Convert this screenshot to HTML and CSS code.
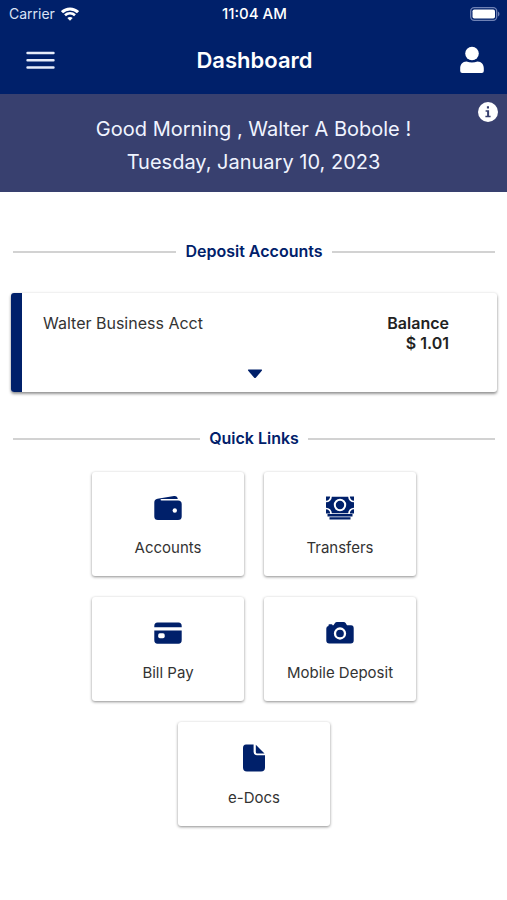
FILE: index.html
```html
<!DOCTYPE html>
<html lang="en">
<head>
<meta charset="utf-8">
<meta name="viewport" content="width=device-width, initial-scale=1">
<title>Dashboard</title>
<link rel="stylesheet" href="styles.css">
</head>
<body>
<header class="header">
  <div class="status">
    <div class="carrier">
      <span>Carrier</span>
      <svg width="18" height="14" viewBox="0 0 18 14" fill="none" stroke="#fff" stroke-width="3" aria-hidden="true">
        <path d="M1 5.200C5.500.8 12.500.8 17 5.200"/>
        <path d="M4 8.300C6.800 5.600 11.200 5.600 14 8.300" stroke-width="2.600"/>
        <path d="M9 13.800 6.300 11C7.800 9.600 10.200 9.600 11.700 11Z" fill="#fff" stroke="none"/>
      </svg>
    </div>
    <span class="time">11:04 AM</span>
    <svg class="battery" width="30" height="14" viewBox="0 0 30 14" aria-hidden="true">
      <rect x=".7" y=".7" width="26" height="12.600" rx="3.500" fill="none" stroke="#6f82b5" stroke-width="1.300"/>
      <rect x="2.500" y="2.500" width="22.500" height="9" rx="1.800" fill="#fff"/>
      <path d="M28 4.500C30 5.500 30 8.500 28 9.500Z" fill="#6f82b5"/>
    </svg>
  </div>
  <nav class="nav">
    <button class="icon-button" type="button" aria-label="Menu">
      <svg width="30" height="20" viewBox="0 0 30 20" stroke="#e6ecfa" stroke-width="2.400" stroke-linecap="round" aria-hidden="true"><path d="M2.500 3H28.500M2.500 10.300H28.500M2.500 17.500H28.500"/></svg>
    </button>
    <h1 class="title">Dashboard</h1>
    <button class="icon-button profile" type="button" aria-label="Profile">
      <svg width="24" height="28" viewBox="0 0 24 28" fill="#fff" aria-hidden="true"><circle cx="12" cy="7.500" r="6.800"/><path d="M6.500 15.500Q12 17.500 17.500 15.500C21.500 15.500 23.800 18.500 23.800 22.500V25Q23.800 27 21.800 27H2.200Q.2 27 .2 25V22.500C.2 18.500 2.500 15.500 6.500 15.500Z"/></svg>
    </button>
  </nav>
</header>
<section class="banner">
  <p>Good Morning , Walter A Bobole !</p>
  <p>Tuesday, January 10, 2023</p>
  <button class="info" type="button" aria-label="Information">
    <svg width="20" height="20" viewBox="0 0 20 20" aria-hidden="true"><circle cx="10" cy="10" r="10" fill="#fff"/><path d="M8.900 4.300H11V6.400H8.900ZM7.600 8.200H11.100V13.700H12.600V15.200H7.400V13.700H9.100V9.700H7.600Z" fill="#38406f"/></svg>
  </button>
</section>
<main class="content">
  <h2 class="divider">Deposit Accounts</h2>
  <article class="account">
    <div class="account-row">
      <span>Walter Business Acct</span>
      <div class="balance"><div>Balance</div><div>$ 1.01</div></div>
    </div>
    <button class="expand" type="button" aria-label="Show details">
      <svg width="16" height="10" viewBox="0 0 16 10" fill="#00206a" aria-hidden="true"><path d="M1.500.5H14.500Q15.500.8 14.800 1.800L9 8.600Q8 9.600 7 8.600L1.200 1.800Q.5.8 1.500.5Z"/></svg>
    </button>
  </article>
  <h2 class="divider">Quick Links</h2>
  <div class="links">
    <a class="tile" href="#accounts">
      <svg width="28" height="28" viewBox="0 0 28 28" fill="#00206a" aria-hidden="true"><path d="M3.500 4.700 20 2.100Q23.300 1.700 23.800 5H7.500Q6.500 5 6.500 5.700T7.500 6.400H24Q27.700 6.500 27.700 10V22.500Q27.700 26 24 26H4Q.3 26 .3 22.500V8.500Q.3 5.300 3.500 4.700Z"/><circle cx="20.800" cy="16.500" r="2.200" fill="#fff"/></svg>
      <span>Accounts</span>
    </a>
    <a class="tile" href="#transfers">
      <svg width="30" height="28" viewBox="0 0 30 28" aria-hidden="true"><path d="M1 2.500H29V19.500H1Z" fill="#00206a"/><circle cx="15" cy="11" r="5.200" fill="#00206a" stroke="#fff" stroke-width="2"/><g fill="#00206a" stroke="#fff" stroke-width="1.700"><circle cx="1" cy="2.500" r="5"/><circle cx="29" cy="2.500" r="5"/><circle cx="1" cy="19.500" r="5"/><circle cx="29" cy="19.500" r="5"/></g><path d="M-6-4H36V28H-6ZM1 2.500V19.500H29V2.500Z" fill="#fff" fill-rule="evenodd"/><path d="M2.500 20H27.500V22.400H2.500ZM4.500 23.200H25.500V25.600H4.500Z" fill="#00206a"/></svg>
      <span>Transfers</span>
    </a>
    <a class="tile" href="#bill-pay">
      <svg width="28" height="28" viewBox="0 0 28 28" fill="#00206a" aria-hidden="true"><path d="M3.500 3.500H24.500Q27.700 3.500 27.700 7V8.300H.3V7Q.3 3.500 3.500 3.500ZM.3 11.400H27.700V21Q27.700 24.800 24.500 24.800H3.500Q.3 24.800 .3 21Z"/><rect x="4.200" y="14.200" width="6.500" height="5" rx="1.700" fill="#fff"/></svg>
      <span>Bill Pay</span>
    </a>
    <a class="tile" href="#mobile-deposit">
      <svg width="28" height="28" viewBox="0 0 28 28" fill="#00206a" aria-hidden="true"><path d="M2.500 7V6Q2.500 5.300 3.500 5.300H5.500Q6.500 5.300 6.500 6.300H7.500L9 4Q9.600 3 11 3H17.500Q19 3 19.600 4L21 6.300H25Q27.700 6.300 27.700 9.300V21.500Q27.700 24.500 24.700 24.500H3.300Q.3 24.500 .3 21.500V9.500Q.3 7.300 2.500 7Z"/><circle cx="14" cy="14.500" r="5" fill="none" stroke="#fff" stroke-width="2.300"/></svg>
      <span>Mobile Deposit</span>
    </a>
    <a class="tile" href="#e-docs">
      <svg width="28" height="28" viewBox="0 0 28 28" fill="#00206a" aria-hidden="true"><path d="M6 .5H13.600V8Q13.600 11.200 16.800 11.200H25V23.500Q25 27.500 21 27.500H7Q3 27.500 3 23.500V4Q3 .5 6 .5Z"/><path d="M15.800.8 24.500 9.500H17.200Q15.800 9.500 15.800 8Z"/></svg>
      <span>e-Docs</span>
    </a>
  </div>
</main>
</body>
</html>
```
FILE: styles.css
```css
* { box-sizing: border-box; }
body {
  margin: 0;
  background: #fff;
  color: #333;
  font: 16px/20px Inter, "Liberation Sans", sans-serif;
}
h1, h2, p { margin: 0; }
button { margin: 0; padding: 0; border: 0; background: none; cursor: pointer; }
svg { display: block; }

.header { background: #00206a; color: #fff; }
.status, .nav {
  display: grid;
  grid-template-columns: 1fr auto 1fr;
  align-items: center;
}
.status {
  height: 28px;
  padding: 0 7px 0 9px;
  font-size: 14px;
}
.carrier { display: flex; align-items: center; gap: 6px; color: #dbe3f5; }
.time { font-size: 15px; font-weight: 500; }
.battery { justify-self: end; }
.nav {
  height: 66px;
  padding: 0 23px 2px 25px;
}
.icon-button { justify-self: start; }
.profile { justify-self: end; }
.title { font-size: 22px; line-height: 28px; font-weight: 600; }

.banner {
  position: relative;
  padding: 19px 32px 13px;
  background: #38406f;
  color: #f0f4ff;
  font-size: 20px;
  line-height: 33px;
  text-align: center;
}
.info { position: absolute; top: 8px; right: 9px; }

.content { padding: 49px 10px 24px 11px; }
.divider {
  display: flex;
  align-items: center;
  gap: 9px;
  padding: 0 2px;
  color: #00206a;
  font-size: 16px;
  font-weight: 600;
}
.divider::before, .divider::after {
  content: "";
  flex: 1;
  height: 2px;
  margin-top: 2px;
  background: #d2d2d2;
}
.account {
  margin: 32px 0 36px;
  padding: 20px 0 13px;
  border-left: 11px solid #00206a;
  border-radius: 3px;
  box-shadow: 0 2px 3px rgba(0, 0, 0, .4), 0 0 3px rgba(0, 0, 0, .12);
}
.account-row {
  display: flex;
  justify-content: space-between;
  padding: 0 48px 0 21px;
}
.balance { color: #222; font-weight: 600; text-align: right; }
.expand { display: block; margin: 16px auto 0; padding-right: 10px; }
.links {
  display: flex;
  flex-wrap: wrap;
  justify-content: center;
  gap: 21px 20px;
  max-width: 360px;
  margin: 24px auto 0;
}
.tile {
  display: flex;
  flex-direction: column;
  align-items: center;
  gap: 16px;
  width: 152px;
  padding: 22px 0 18px;
  border-radius: 3px;
  box-shadow: 0 1px 3px rgba(0, 0, 0, .45);
  color: #333;
  font-size: 15px;
  text-decoration: none;
}
```
